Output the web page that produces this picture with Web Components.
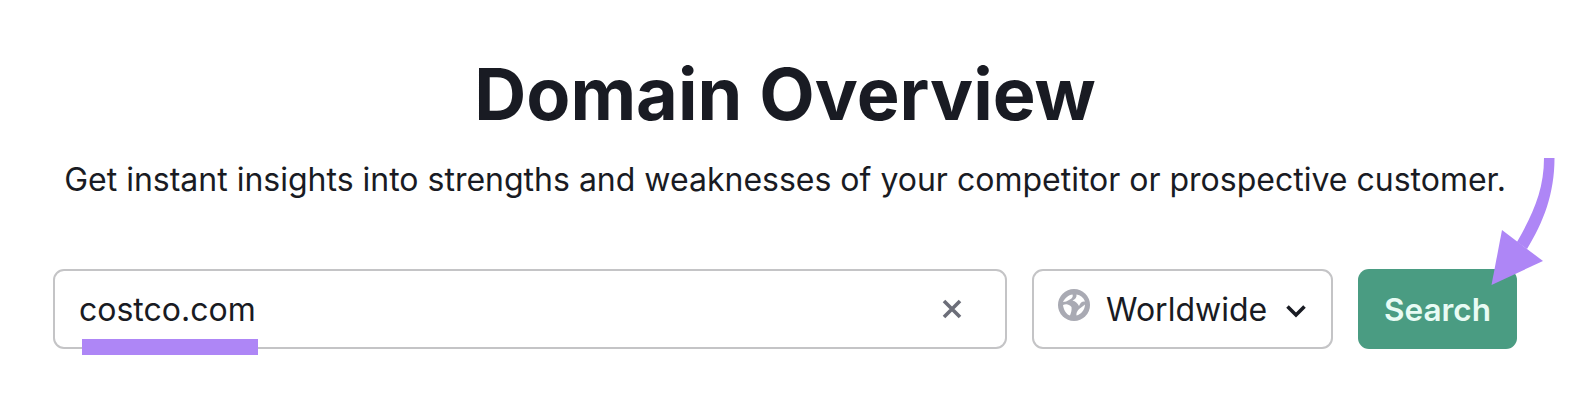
<!DOCTYPE html>
<html lang="en">
<head>
<meta charset="utf-8">
<title>Domain Overview</title>
<style>
  html, body { margin: 0; background: #fff; }
  body { font-family: Inter, "Liberation Sans", sans-serif; color: #191b23; }
</style>
</head>
<body>
<domain-overview>
  <span slot="title">Domain Overview</span>
  <span slot="subtitle">Get instant insights into strengths and weaknesses of your competitor or prospective customer.</span>
  <search-field slot="controls" value="costco.com"></search-field>
  <region-select slot="controls" label="Worldwide"></region-select>
  <search-button slot="controls">Search</search-button>
</domain-overview>

<script>
class DomainOverview extends HTMLElement {
  constructor() {
    super();
    this.attachShadow({ mode: "open" });
    this.shadowRoot.innerHTML = `
      <style>
        :host { display: block; position: relative; width: 1464px; height: 412px; margin-left: 53px; }
        .head { display: flex; flex-direction: column; align-items: center; padding-top: 49px; white-space: nowrap; }
        h1 { margin: 0; font-size: 72px; line-height: 90px; font-weight: 700; }
        p { margin: 0; padding-top: 21px; font-size: 32px; line-height: 40px; font-weight: 400; }
        .controls { display: flex; gap: 25px; padding-top: 69px; }
        svg { position: absolute; left: 1427px; top: 150px; }
      </style>
      <div class="head">
        <h1><slot name="title"></slot></h1>
        <p><slot name="subtitle"></slot></p>
      </div>
      <div class="controls"><slot name="controls"></slot></div>
      <svg width="130" height="150" viewBox="1480 150 130 150" aria-hidden="true">
        <path fill="#ae86f6" d="M1544 158h10.500c0 36-11 64-27.500 91l-10-7c16-28 27-52 27-84z"/>
        <path fill="#ae86f6" d="M1502 230L1543 261 1491.500 285z"/>
      </svg>
    `;
  }
}

class SearchField extends HTMLElement {
  constructor() {
    super();
    this.attachShadow({ mode: "open" });
    this.shadowRoot.innerHTML = `
      <style>
        :host { display: flex; position: relative; box-sizing: border-box; flex: none; width: 954px; height: 80px;
                align-items: center; justify-content: space-between; padding: 0 42px 0 24px;
                border: 2px solid #c4c4c6; border-radius: 11px; background: #fff; }
        .value { font-size: 32px; }
        .mark { position: absolute; left: 27px; top: 68px; width: 176px; height: 16px; background: #ae86f6; }
        svg { display: block; }
      </style>
      <span class="value"></span>
      <svg width="22" height="22" viewBox="0 0 22 22" aria-hidden="true">
        <path d="M3 3l16 16M19 3L3 19" stroke="#6c6e79" stroke-width="3.600" fill="none"/>
      </svg>
      <span class="mark"></span>
    `;
    this.shadowRoot.querySelector(".value").textContent = this.getAttribute("value") || "";
  }
}

class RegionSelect extends HTMLElement {
  constructor() {
    super();
    this.attachShadow({ mode: "open" });
    this.shadowRoot.innerHTML = `
      <style>
        :host { display: flex; box-sizing: border-box; flex: none; width: 301px; height: 80px; align-items: center;
                padding-left: 24px; border: 2px solid #c4c4c6; border-radius: 11px; background: #fff; }
        .globe { display: block; margin-top: -8px; }
        .label { font-size: 32px; margin-left: 16px; }
        .chev { display: block; margin-left: 18px; margin-top: 4px; }
      </style>
      <svg class="globe" width="32" height="32" viewBox="0 0 32 32" aria-hidden="true">
        <circle cx="16" cy="16" r="16" fill="#a9aab3"/>
        <path fill="#fff" d="M5 13C7 9 10.500 6 14.500 5.500c1 2.500-1 4.500-3.500 5.500-2 1-3.500 2-6 2zM18.500 5.500c4 .5 7 3 8.500 7-2.500-.5-4.500.5-6 4.500-1.500-3-3.500-4.500-6.500-5.500 2.500-1 4.500-3 4-6zM5 16c3-1.500 6-1 8.500 2 .5 3-.5 6-1.500 8.500-3.500-1-6.500-5.500-7-10.500zM18.500 26.500c-.5-3.500 2-6 4-7.500l4.500-3.500c0 5-4 10-8.500 11z"/>
      </svg>
      <span class="label"></span>
      <svg class="chev" width="22" height="14" viewBox="0 0 22 14" aria-hidden="true">
        <path d="M2.500 2.500l8.500 8.500 8.500-8.500" stroke="#191b23" stroke-width="3.600" fill="none"/>
      </svg>
    `;
    this.shadowRoot.querySelector(".label").textContent = this.getAttribute("label") || "";
  }
}

class SearchButton extends HTMLElement {
  constructor() {
    super();
    this.attachShadow({ mode: "open" });
    this.shadowRoot.innerHTML = `
      <style>
        :host { display: flex; flex: none; width: 159px; height: 80px; align-items: center; justify-content: center;
                border-radius: 11px; background: #4a9c82; color: #e8fbf4; font-size: 31.500px; font-weight: 600; }
      </style>
      <slot></slot>
    `;
  }
}

customElements.define("domain-overview", DomainOverview);
customElements.define("search-field", SearchField);
customElements.define("region-select", RegionSelect);
customElements.define("search-button", SearchButton);
</script>
</body>
</html>
